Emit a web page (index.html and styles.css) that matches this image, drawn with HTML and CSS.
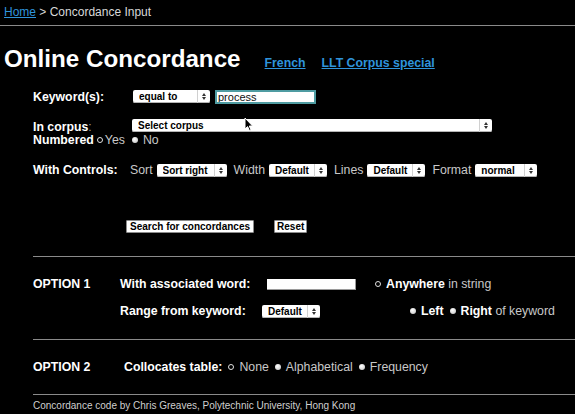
FILE: index.html
```html
<!DOCTYPE html>
<html lang="en">
<head>
    <meta charset="UTF-8">
    <meta name="viewport" content="width=device-width, initial-scale=1.0">
    <title>Concordance Input</title>
    <link rel="stylesheet" href="styles.css">
</head>
<body>
    <div class="crumbs"><a href="#">Home</a> &gt; Concordance Input</div>

    <div class="heading">
        <h1>Online Concordance</h1>
        <a class="toplink" href="#">French</a>
        <a class="toplink second" href="#">LLT Corpus special</a>
    </div>

    <form class="conc">
        <div class="row kw">
            <span class="lbl w-kw">Keyword(s):</span>
            <span class="sel s-equal"><select><option>equal to</option><option>starting with</option></select><i class="arr"></i></span>
            <input class="kwinput" type="text" value="process">
        </div>

        <div class="row corpus">
            <span class="lbl w-corpus low">In corpus<span class="dim">:</span></span>
            <span class="sel s-corpus"><select><option>Select corpus</option></select><i class="arr"></i></span>
        </div>
        <div class="numbered">
            <b class="white">Numbered</b><label class="rd first"><input type="radio" name="num" checked>Yes</label><label class="rd"><input type="radio" name="num">No</label>
        </div>

        <div class="row controls">
            <span class="lbl w-ctl">With Controls:</span>
            <span class="ctl">Sort</span>
            <span class="sel s-sort"><select><option>Sort right</option></select><i class="arr"></i></span>
            <span class="ctl">Width</span>
            <span class="sel s-def"><select><option>Default</option></select><i class="arr"></i></span>
            <span class="ctl">Lines</span>
            <span class="sel s-def"><select><option>Default</option></select><i class="arr"></i></span>
            <span class="ctl">Format</span>
            <span class="sel s-fmt"><select><option>normal</option></select><i class="arr"></i></span>
        </div>

        <div class="row buttons">
            <button type="button">Search for concordances</button>
            <button type="reset" class="reset">Reset</button>
        </div>

        <div class="rule first-rule"></div>

        <div class="row opt1">
            <span class="optname">OPTION 1</span>
            <span class="lbl w-assoc">With associated word:</span>
            <input class="assoc" type="text">
            <label class="rd any"><input type="radio" name="where" checked><b class="white">Anywhere</b>&nbsp;in string</label>
        </div>
        <div class="row opt1b">
            <span class="optname"></span>
            <span class="lbl w-range">Range from keyword:</span>
            <span class="sel s-def"><select><option>Default</option></select><i class="arr"></i></span>
            <label class="rd side"><input type="radio" name="where"><b class="white">Left</b></label>
            <label class="rd"><input type="radio" name="where"><b class="white">Right</b>&nbsp;of keyword</label>
        </div>

        <div class="rule r2"></div>

        <div class="row opt2">
            <span class="optname">OPTION 2</span>
            <span class="lbl coll">Collocates table:</span>
            <label class="rd"><input type="radio" name="coll" checked>None</label>
            <label class="rd"><input type="radio" name="coll">Alphabetical</label>
            <label class="rd"><input type="radio" name="coll">Frequency</label>
        </div>

        <div class="rule"></div>

        <p class="footer">Concordance code by Chris Greaves, Polytechnic University, Hong Kong</p>
    </form>

    <svg class="cursor" width="10" height="15" viewBox="0 0 10 15">
        <path d="M1 1 L1 12 L3.6 9.6 L5.4 13.6 L7 12.9 L5.3 9 L8.6 9 Z" fill="#000" stroke="#fff" stroke-width="1"/>
    </svg>
</body>
</html>
```

FILE: styles.css
```css
body {
    margin: 0;
    background-color: #000;
    color: #c8c8c8;
    font-family: "Liberation Sans", Arial, sans-serif;
    font-size: 12px;
}

a {
    color: #2f94dc;
}

.white {
    color: #fff;
    font-weight: bold;
}

.dim {
    color: #9a9a9a;
    font-weight: normal;
}

/* top bar */
.crumbs {
    padding: 5px 4px 6px;
    line-height: 14px;
    color: #d8d8d8;
    border-bottom: 1px solid #8a8a8a;
}

.heading {
    display: flex;
    align-items: baseline;
    margin: 19px 0 0 4px;
}

h1 {
    margin: 0;
    font-size: 24.2px;
    line-height: 27px;
    color: #fff;
}

.toplink {
    margin-left: 24px;
    font-weight: bold;
    font-size: 12.3px;
}

.toplink.second {
    margin-left: 16px;
}

/* form */
.conc {
    margin: 17px 0 0 33px;
}

.row {
    display: flex;
    align-items: center;
    height: 14px;
}

.lbl {
    color: #fff;
    font-weight: bold;
    font-size: 12.3px;
    white-space: nowrap;
    flex: none;
}

.low {
    padding-top: 3px;
    line-height: 13px;
}

.w-kw { width: 100px; }
.w-corpus { width: 99px; }
.w-ctl { width: 97px; }
.w-assoc { width: 147px; }
.w-range { width: 142px; }
.coll { margin-left: 4px; }

.kw {
    height: 15px;
}

.corpus {
    margin-top: 15px;
    height: 13px;
}

.numbered {
    margin-top: 2px;
    line-height: 12px;
    display: flex;
    align-items: center;
}

.numbered .white {
    font-size: 12.3px;
}

.controls {
    margin-top: 17px;
}

.ctl {
    margin: 0 4px 0 0;
    font-size: 12.3px;
}

.controls .sel {
    margin-right: 7px;
}

/* fake aqua selects */
.sel {
    display: inline-flex;
    height: 13px;
    background-color: #fff;
    border-radius: 2px;
    box-shadow: inset 0 -1px #b4b4b4;
    flex: none;
    box-sizing: border-box;
}

.sel select {
    appearance: none;
    -webkit-appearance: none;
    border: 0;
    background: transparent;
    font-family: "Liberation Sans", Arial, sans-serif;
    font-weight: bold;
    font-size: 10px;
    color: #000;
    padding: 0 0 0 6px;
    margin: 0;
    height: 13px;
    line-height: 13px;
    flex: 1;
    min-width: 0;
    outline: none;
}

.arr {
    width: 12px;
    border-left: 1px solid #d0d0d0;
    display: flex;
    flex-direction: column;
    align-items: center;
    justify-content: center;
    gap: 1px;
}

.arr::before,
.arr::after {
    content: "";
    border-left: 2.5px solid transparent;
    border-right: 2.5px solid transparent;
}

.arr::before {
    border-bottom: 3px solid #333;
}

.arr::after {
    border-top: 3px solid #333;
}

.s-equal { width: 77px; }
.s-corpus { width: 360px; }
.s-sort { width: 70px; }
.s-def { width: 58px; }
.s-fmt { width: 62px; }

.kwinput {
    margin-left: 5px;
    width: 101px;
    height: 14px;
    box-sizing: border-box;
    border: 2px solid #4f9ca2;
    padding: 0 1px;
    font-family: "Liberation Sans", Arial, sans-serif;
    font-size: 11px;
    color: #111;
    background: #fff;
    outline: none;
}

/* radios */
.rd {
    display: inline-flex;
    align-items: center;
    margin-left: 6px;
    white-space: nowrap;
    font-size: 12.3px;
}

.rd input {
    appearance: none;
    -webkit-appearance: none;
    width: 6px;
    height: 6px;
    margin: 0 5px 0 0;
    border-radius: 50%;
    background: radial-gradient(circle at 40% 35%, #fff, #bdbdbd);
    flex: none;
}

.rd input:checked {
    background: #000;
    border: 1.5px solid #e0e0e0;
    box-sizing: border-box;
    width: 6px;
    height: 6px;
}

.numbered .rd {
    margin-left: 7px;
}

.numbered .rd.first {
    margin-left: 3px;
}

.numbered .rd.first input {
    margin-right: 2px;
}

/* buttons */
.buttons {
    margin-top: 43px;
    padding-left: 93px;
    height: 13px;
}

button {
    font-family: "Liberation Sans", Arial, sans-serif;
    font-weight: bold;
    font-size: 10px;
    color: #000;
    background: #fff;
    border: 1px solid #8c8c8c;
    border-radius: 1px;
    padding: 0 3px;
    height: 13px;
    line-height: 11px;
    margin: 0;
}

.reset {
    margin-left: 20px;
    padding: 0 2px;
}

.rule {
    border-top: 1px solid #8a8a8a;
    margin-top: 20px;
}

.first-rule {
    margin-top: 23px;
}

.rule.r2 {
    margin-top: 21px;
}

.optname {
    width: 87px;
    color: #fff;
    font-weight: bold;
    font-size: 12.3px;
    flex: none;
}

.opt1 {
    margin-top: 20px;
}

.opt1b {
    margin-top: 13px;
}

.opt2 {
    margin-top: 20px;
}

.assoc {
    width: 89px;
    height: 11px;
    box-sizing: border-box;
    border: 0;
    padding: 0;
    background: #fff;
    box-shadow: inset -1px -1px #9a9a9a;
    outline: none;
}

.rd.any {
    margin-left: 19px;
}

.rd.side {
    margin-left: 90px;
}

.footer {
    margin: 5px 0 0;
    font-size: 10px;
    line-height: 12px;
    color: #cfcfcf;
}

.cursor {
    position: absolute;
    left: 244px;
    top: 117px;
}
```
